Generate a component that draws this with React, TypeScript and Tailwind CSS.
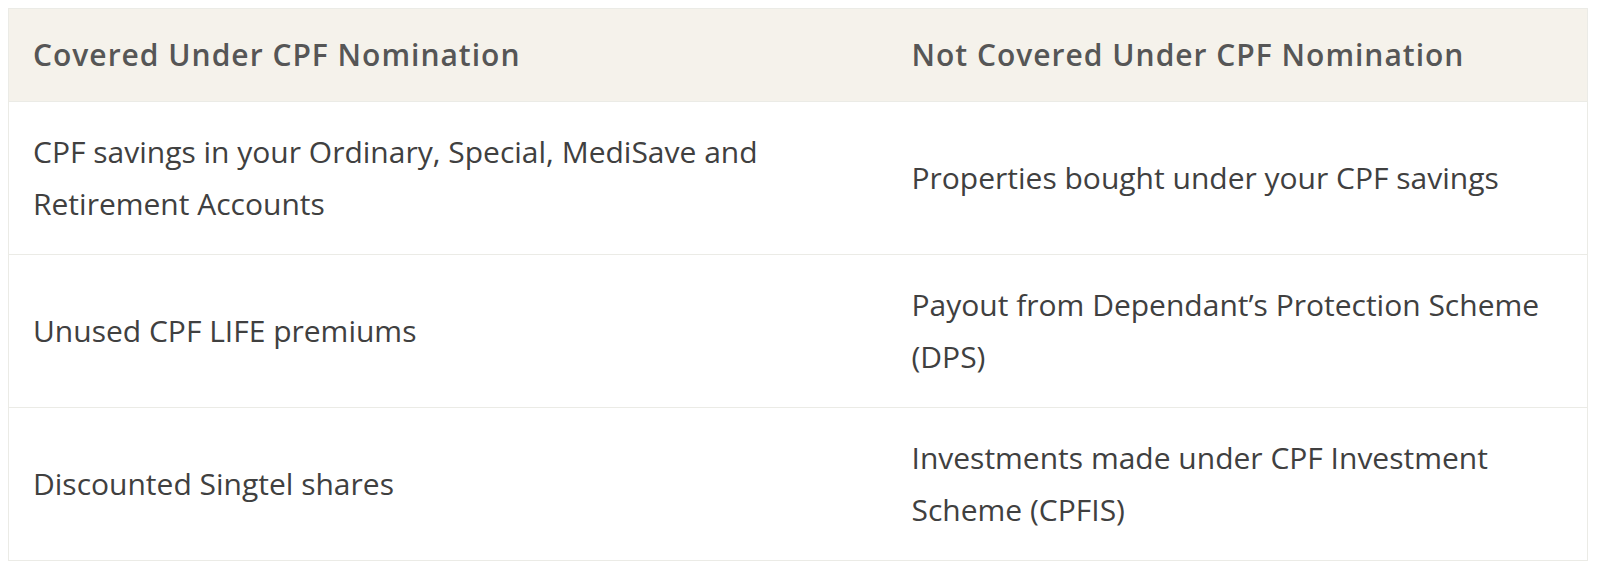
import React from 'react';

const rows = [
  {
    covered: "CPF savings in your Ordinary, Special, MediSave and Retirement Accounts",
    notCovered: "Properties bought under your CPF savings"
  },
  {
    covered: "Unused CPF LIFE premiums",
    notCovered: "Payout from Dependant’s Protection Scheme (DPS)"
  },
  {
    covered: "Discounted Singtel shares",
    notCovered: "Investments made under CPF Investment Scheme (CPFIS)"
  }
];

const App: React.FC = () => {
  return (
    <div className="min-h-screen bg-white pt-2 pl-2 pr-3 font-['Open_Sans',sans-serif]">
      <table className="w-full table-fixed border-collapse border border-[#ebebe6] text-[30px] leading-[52px]">
        <colgroup>
          <col className="w-[879px]" />
          <col />
        </colgroup>
        <thead>
          <tr className="bg-[#f5f2eb]">
            <th className="px-6 py-5 text-left font-semibold tracking-[1px] text-[#565656]">Covered Under CPF Nomination</th>
            <th className="px-6 py-5 text-left font-semibold tracking-[1px] text-[#565656]">Not Covered Under CPF Nomination</th>
          </tr>
        </thead>
        <tbody>
          {rows.map((row, index) => (
            <tr key={index} className="border-t border-[#ebebe6]">
              <td className="px-6 py-6 align-middle text-[#404040]">{row.covered}</td>
              <td className="px-6 py-6 align-middle text-[#404040]">{row.notCovered}</td>
            </tr>
          ))}
        </tbody>
      </table>
    </div>
  );
}

export default App;
